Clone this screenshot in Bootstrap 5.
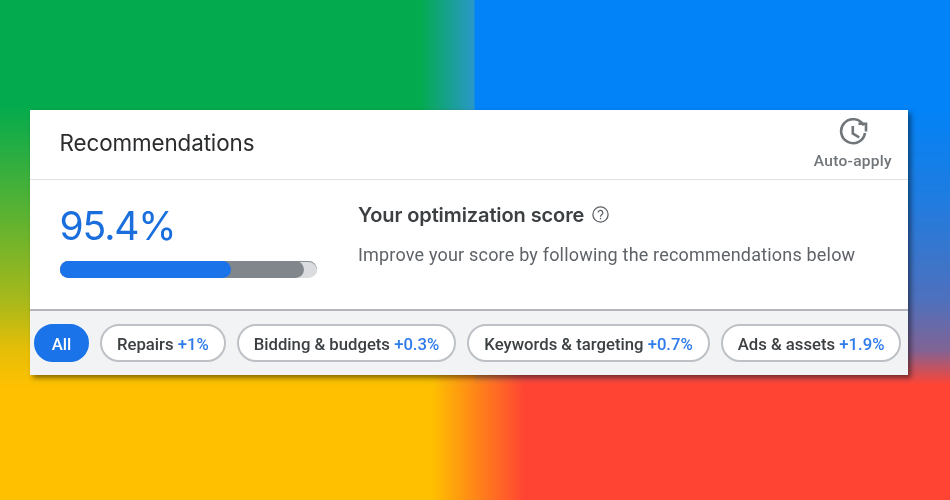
<!DOCTYPE html>
<html lang="en">
<head>
    <meta charset="UTF-8">
    <meta name="viewport" content="width=device-width, initial-scale=1.0">
    <title>Recommendations</title>
    <link href="https://cdn.jsdelivr.net/npm/bootstrap@5.3.0/dist/css/bootstrap.min.css" rel="stylesheet">
    <style>
        /* Background: two horizontal colour bands cross-faded top to bottom */
        html, body { height: 100%; }
        body {
            overflow: hidden;
            padding: 110px 42px 0 30px;
            background: linear-gradient(90deg, #03ab4e 420px, #2a98c8 474px, #0284f8 475px);
            font-family: Roboto, "Liberation Sans", sans-serif;
        }
        body::before {
            content: "";
            position: fixed;
            inset: 0;
            z-index: -1;
            background: linear-gradient(90deg, #ffc000 432px, #ff4433 525px);
            -webkit-mask-image:
                linear-gradient(180deg, transparent 105px, rgba(0,0,0,.3) 200px, rgba(0,0,0,.65) 300px, rgba(0,0,0,.9) 350px, #000 390px),
                linear-gradient(180deg, transparent 105px, rgba(0,0,0,.12) 200px, rgba(0,0,0,.3) 300px, rgba(0,0,0,.5) 350px, #000 385px);
            mask-image:
                linear-gradient(180deg, transparent 105px, rgba(0,0,0,.3) 200px, rgba(0,0,0,.65) 300px, rgba(0,0,0,.9) 350px, #000 390px),
                linear-gradient(180deg, transparent 105px, rgba(0,0,0,.12) 200px, rgba(0,0,0,.3) 300px, rgba(0,0,0,.5) 350px, #000 385px);
            -webkit-mask-size: 50% 100%;
            mask-size: 50% 100%;
            -webkit-mask-position: left top, right top;
            mask-position: left top, right top;
            -webkit-mask-repeat: no-repeat;
            mask-repeat: no-repeat;
        }
        .rec-panel {
            height: 265px;
            border: 0;
            border-radius: 0;
            background: #fff;
            box-shadow: 3px 3px 5px rgba(0, 0, 0, .45);
        }
        .rec-head {
            height: 70px;
            padding: 0 16px 0 29.5px;
            border-bottom: 1px solid #e0e1e3;
        }
        .rec-title {
            margin: 22px 0 0;
            font: 400 22.4px/1 Inter, sans-serif;
            letter-spacing: -.1px;
            color: #2a2c2e;
        }
        .auto-apply {
            color: #70757a;
            font-size: 15.5px;
            font-weight: 500;
            letter-spacing: .3px;
            line-height: 18px;
        }
        .auto-apply svg { display: block; margin: 8px 0 4px; }
        .score-area { height: 130px; padding-left: 29.5px; }
        .score-left { width: 298.5px; flex: none; padding-top: 23px; }
        .score-num {
            font: 400 39px/46px Inter, sans-serif;
            letter-spacing: -1.1px;
            color: #1a6fdc;
            margin-bottom: 12px;
        }
        .score-track {
            width: 257px;
            height: 17px;
            margin-left: .5px;
            border-radius: 9px;
            background: #dadce0;
            box-shadow: inset 0 1px 0 #8a8d90;
        }
        .score-gray { height: 100%; background: #80868b; border-radius: 9px; }
        .score-blue { height: 100%; background: #1a73e8; border-radius: 9px; }
        .score-right { padding-top: 23px; }
        .score-heading {
            margin: 0;
            font: 600 20px/24px Inter, sans-serif;
            letter-spacing: -.1px;
            color: #3c4043;
        }
        .score-text {
            margin: 16px 0 0;
            font-size: 18px;
            line-height: 24px;
            letter-spacing: .19px;
            color: #5f6368;
        }
        .chip-bar {
            height: 66px;
            padding-left: 4px;
            gap: 11px;
            background: #f1f3f4;
            border-top: 2px solid #b4b6b9;
        }
        .rec-chip {
            height: 38px;
            padding: 0 15px;
            border: 2.5px solid #bdc1c6;
            border-radius: 19px;
            background: #fff;
            color: #3c4043;
            font-size: 16.7px;
            font-weight: 500;
            line-height: 37px;
            white-space: nowrap;
        }
        .rec-chip span { color: #2f7bea; }
        .rec-chip.chip-on {
            width: 55px;
            padding: 0;
            border-color: #1a73e8;
            background: #1a73e8;
            color: #fff;
            text-align: center;
        }
    </style>
</head>
<body>
    <div class="card rec-panel">
        <div class="rec-head d-flex justify-content-between align-items-start">
            <h1 class="rec-title">Recommendations</h1>
            <div class="auto-apply d-flex flex-column align-items-center">
                <svg width="30" height="30" viewBox="0 0 30 30" fill="none" stroke="#70757a" stroke-width="2.6">
                    <path d="M25.7 7.5A12 12 0 1 0 27 15"/>
                    <path d="M20.5 5.8H28V13.5"/>
                    <path d="M14.8 8V15.6L21.2 19.4"/>
                </svg>
                Auto-apply
            </div>
        </div>
        <div class="score-area d-flex">
            <div class="score-left">
                <div class="score-num">95.4%</div>
                <div class="score-track">
                    <div class="score-gray" style="width: 95%">
                        <div class="score-blue" style="width: 70%"></div>
                    </div>
                </div>
            </div>
            <div class="score-right">
                <h2 class="score-heading d-flex align-items-center gap-2">
                    Your optimization score
                    <svg width="17" height="17" viewBox="0 0 17 17" fill="none" stroke="#5f6368" stroke-width="1.3">
                        <circle cx="8.5" cy="8.5" r="7.6"/>
                        <path d="M6.2 6.6a2.3 2.3 0 1 1 3.7 1.9c-.9.7-1.4 1.1-1.4 2.2"/>
                        <path d="M8.5 11.8v1.5"/>
                    </svg>
                </h2>
                <p class="score-text">Improve your score by following the recommendations below</p>
            </div>
        </div>
        <div class="chip-bar d-flex align-items-center">
            <div class="rec-chip chip-on">All</div>
            <div class="rec-chip">Repairs <span>+1%</span></div>
            <div class="rec-chip">Bidding &amp; budgets <span>+0.3%</span></div>
            <div class="rec-chip">Keywords &amp; targeting <span>+0.7%</span></div>
            <div class="rec-chip">Ads &amp; assets <span>+1.9%</span></div>
        </div>
    </div>
    <script src="https://cdn.jsdelivr.net/npm/bootstrap@5.3.0/dist/js/bootstrap.bundle.min.js"></script>
</body>
</html>
